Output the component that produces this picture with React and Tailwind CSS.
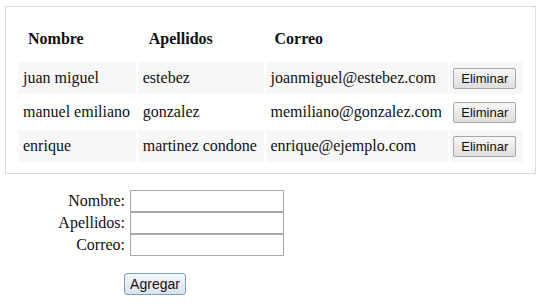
import React, { useState } from "react";

const initialPeople = [
  { nombre: "juan miguel", apellidos: "estebez", correo: "joanmiguel@estebez.com" },
  { nombre: "manuel emiliano", apellidos: "gonzalez", correo: "memiliano@gonzalez.com" },
  { nombre: "enrique", apellidos: "martinez condone", correo: "enrique@ejemplo.com" },
];

const App = () => {
  const [people, setPeople] = useState(initialPeople);
  const [form, setForm] = useState({ nombre: "", apellidos: "", correo: "" });

  const handleChange = (field) => (e) => {
    setForm((f) => ({ ...f, [field]: e.target.value }));
  };

  const handleAdd = () => {
    if (!form.nombre.trim()) return;
    setPeople((p) => [...p, form]);
    setForm({ nombre: "", apellidos: "", correo: "" });
  };

  const handleRemove = (idx) => {
    setPeople((p) => p.filter((_, i) => i !== idx));
  };

  return (
    <div className="pt-[6px] pl-[5px] text-[16px] text-[#111] font-['Liberation_Serif',serif]">
      <div className="w-[531px] border border-[#dcdcdc] px-[10px] pt-[9px] pb-[9px]">
        <table className="border-separate border-spacing-[2px]">
          <thead>
            <tr>
              <th className="w-[118px] text-left font-bold pl-[10px] py-[12px] leading-[18px]">Nombre</th>
              <th className="w-[126px] text-left font-bold pl-[11px] py-[12px] leading-[18px]">Apellidos</th>
              <th className="w-[183px] text-left font-bold pl-[9px] py-[12px] leading-[18px]">Correo</th>
              <th className="w-[73px]"></th>
            </tr>
          </thead>
          <tbody>
            {people.map((p, i) => {
              const bg = i % 2 === 0 ? "bg-[#f7f7f7]" : "bg-white";
              return (
                <tr key={i} className="h-[32px]">
                  <td className={`${bg} pl-[5px] py-[7px] leading-[18px] whitespace-nowrap`}>{p.nombre}</td>
                  <td className={`${bg} pl-[5px] py-[7px] leading-[18px] whitespace-nowrap`}>{p.apellidos}</td>
                  <td className={`${bg} pl-[5px] py-[7px] leading-[18px] whitespace-nowrap`}>{p.correo}</td>
                  <td className={`${bg} pl-[3px] py-0 leading-none align-middle`}>
                    <button
                      className="block w-[63px] h-[21px] text-[13px] leading-none font-['Liberation_Sans',sans-serif] text-[#111] border border-[#a8a8a8] rounded-[2px] bg-gradient-to-b from-[#f7f7f7] to-[#dedede]"
                      onClick={() => handleRemove(i)}
                    >
                      Eliminar
                    </button>
                  </td>
                </tr>
              );
            })}
          </tbody>
        </table>
      </div>

      <div className="mt-[16px] -ml-[5px]">
        <div className="flex items-center">
          <label className="w-[125px] text-right leading-[18px]">Nombre:</label>
          <input
            className="ml-[5px] w-[154px] h-[22px] border border-[#a9a9a9] bg-white px-1 text-[13px] outline-none"
            value={form.nombre}
            onChange={handleChange("nombre")}
          />
        </div>
        <div className="flex items-center">
          <label className="w-[125px] text-right leading-[18px]">Apellidos:</label>
          <input
            className="ml-[5px] w-[154px] h-[22px] border border-[#a9a9a9] bg-white px-1 text-[13px] outline-none"
            value={form.apellidos}
            onChange={handleChange("apellidos")}
          />
        </div>
        <div className="flex items-center">
          <label className="w-[125px] text-right leading-[18px]">Correo:</label>
          <input
            className="ml-[5px] w-[154px] h-[22px] border border-[#a9a9a9] bg-white px-1 text-[13px] outline-none"
            value={form.correo}
            onChange={handleChange("correo")}
          />
        </div>
        <button
          className="mt-[17px] ml-[124px] w-[62px] h-[22px] text-[14px] leading-none font-['Liberation_Sans',sans-serif] text-[#111] border border-[#7b9dc9] rounded-[3px] bg-gradient-to-b from-[#f5f7fa] to-[#dbe2ea]"
          onClick={handleAdd}
        >
          Agregar
        </button>
      </div>
    </div>
  );
};

export default App;
